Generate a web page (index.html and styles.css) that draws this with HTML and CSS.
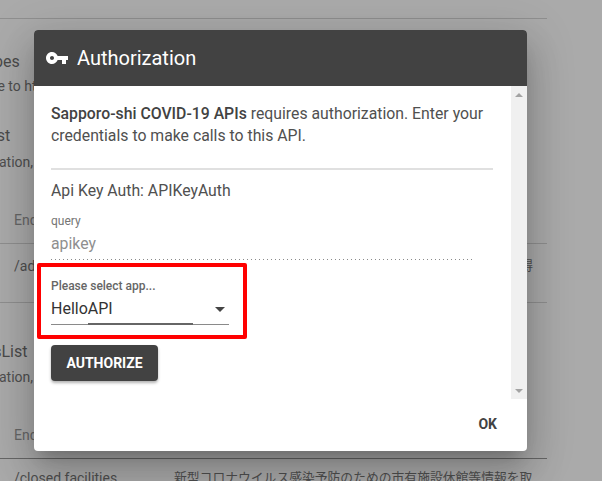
FILE: index.html
```html
<!DOCTYPE html>
<html lang="en">
<head>
<meta charset="utf-8">
<title>Authorization</title>
<link rel="stylesheet" href="styles.css">
</head>
<body>
<main class="page">
  <div class="rule rule-top"></div>
  <h2 class="bg-title bg-title-a">Scopes</h2>
  <p class="bg-text bg-text-a">Subscribe to https://example</p>
  <h2 class="bg-title bg-title-b">FacilitiesList</h2>
  <p class="bg-text bg-text-b">information,</p>
  <p class="bg-end bg-end-a">Endpoint</p>
  <div class="rule rule-a"></div>
  <div class="bg-row bg-row-a"><span>/admin</span><span class="bg-desc">新型コロナウイルス感染予防のための市有施設休館等情報を取得</span></div>
  <div class="rule rule-b"></div>
  <h2 class="bg-title bg-title-c">ClosedFacilitiesList</h2>
  <p class="bg-text bg-text-c">information,</p>
  <p class="bg-end bg-end-b">Endpoint</p>
  <div class="rule rule-c"></div>
  <div class="bg-row bg-row-b"><span class="bg-path">/closed facilities</span><span class="bg-desc-b">新型コロナウイルス感染予防のための市有施設休館等情報を取</span></div>
</main>

<section class="dialog">
  <header class="dialog-head">
    <svg class="key" viewBox="0 0 24 24" aria-hidden="true"><path d="M12.65 10C11.83 7.67 9.61 6 7 6c-3.31 0-6 2.69-6 6s2.69 6 6 6c2.61 0 4.83-1.67 5.65-4H17v4h4v-4h2v-4H12.65zM7 14c-1.1 0-2-.9-2-2s.9-2 2-2 2 .9 2 2-.9 2-2 2z"/></svg>
    <h1>Authorization</h1>
  </header>
  <div class="dialog-scroll">
    <div class="dialog-body">
      <p class="intro"><strong>Sapporo-shi COVID-19 APIs</strong> requires authorization. Enter your credentials to make calls to this API.</p>
      <hr class="divider">
      <p class="auth-name">Api Key Auth: APIKeyAuth</p>
      <div class="query">
        <label>query</label>
        <div class="query-value">apikey</div>
      </div>
      <div class="select-field">
        <label>Please select app...</label>
        <div class="select-value">
          <span>HelloAPI</span>
          <i class="caret"></i>
        </div>
        <i class="ripple"></i>
      </div>
      <button class="authorize">AUTHORIZE</button>
    </div>
    <div class="scrollbar"><i class="arrow-up"></i><i class="arrow-down"></i></div>
  </div>
  <footer class="dialog-foot"><button class="ok">OK</button></footer>
  <div class="highlight"></div>
</section>
</body>
</html>
```
FILE: styles.css
```css
* { box-sizing: border-box; }
html, body { margin: 0; height: 100%; }
body {
  width: 602px;
  height: 481px;
  overflow: hidden;
  position: relative;
  background: #aaaaaa;
  font-family: Roboto, "Noto Sans CJK JP", sans-serif;
  color: #444;
}
.page { width: 547px; height: 481px; overflow: hidden; }
.rule { height: 1px; background: #8f8f8f; width: 547px; }
.rule-top { margin-top: 18px; }
.bg-title { margin: 0; font-weight: 400; font-size: 16px; line-height: 20px; color: #4a4a4a; white-space: nowrap; }
.bg-text { margin: 0; font-size: 14px; line-height: 18px; color: #4f4f4f; white-space: nowrap; }
.bg-end { margin: 0 0 0 14px; font-size: 14px; line-height: 18px; color: #666; }
.bg-title-a { margin-top: 33px; margin-left: -33px; }
.bg-text-a { margin-top: 5px; margin-left: -57px; }
.bg-title-b { margin-top: 31px; margin-left: -79px; }
.bg-text-b { margin-top: 7px; margin-left: -42px; }
.bg-end-a { margin-top: 40px; }
.rule-a { margin-top: 14px; }
.bg-row { display: flex; align-items: center; font-size: 14px; line-height: 18px; color: #4f4f4f; white-space: nowrap; padding-left: 14px; }
.bg-row-a { margin-top: 13px; justify-content: space-between; }
.bg-desc { margin-right: 14px; font-size: 12.8px; }
.bg-desc-b { font-size: 12.8px; }
.rule-b { margin-top: 27px; }
.bg-title-c { margin-top: 39px; margin-left: -111px; }
.bg-text-c { margin-top: 6px; margin-left: -42px; }
.bg-end-b { margin-top: 40px; }
.rule-c { margin-top: 14px; background: #666; }
.bg-row-b { margin-top: 10px; }
.bg-path { width: 160px; flex: none; }

.dialog {
  position: absolute;
  left: 34px;
  top: 30px;
  width: 493px;
  height: 421px;
  background: #fff;
  border-radius: 4px;
  display: flex;
  flex-direction: column;
  box-shadow: 0 11px 15px -7px rgba(0,0,0,.2), 0 24px 38px 3px rgba(0,0,0,.14), 0 9px 46px 8px rgba(0,0,0,.12);
}
.dialog-head {
  height: 56px;
  flex: none;
  background: #424242;
  border-radius: 4px 4px 0 0;
  display: flex;
  align-items: center;
  gap: 8px;
  padding-left: 11px;
  color: #fff;
}
.key { width: 24px; height: 24px; fill: #fff; flex: none; }
.dialog-head h1 { margin: 0; font-size: 20px; font-weight: 400; line-height: 24px; }
.dialog-scroll { height: 313px; flex: none; display: flex; }
.dialog-body { flex: 1; padding: 17px 18px 0 17px; min-width: 0; }
.intro { margin: 0; font-size: 15.8px; line-height: 22px; color: #505050; }
.intro strong { font-weight: 500; color: #424242; }
.divider { border: 0; height: 2px; background: #e0e0e0; margin: 21px 0 0; }
.auth-name { margin: 11px 0 0; font-size: 15.8px; line-height: 20px; color: #505050; }
.query {
  margin-top: 13px;
  width: 424px;
  height: 46px;
  background: linear-gradient(90deg, #8a8a8a 1px, transparent 1px) left bottom / 4px 1px repeat-x;
}
.query label { display: block; font-size: 12px; line-height: 14px; color: #757575; }
.query-value { margin-top: 6px; font-size: 15.8px; line-height: 20px; color: #8f8f8f; }
.select-field { position: relative; margin-top: 19px; width: 178px; height: 46px; border-bottom: 1px solid #8a8a8a; }
.select-field label { display: block; font-size: 12px; line-height: 14px; color: #666; font-weight: 500; }
.select-value { display: flex; align-items: center; justify-content: space-between; margin-top: 6px; font-size: 16px; line-height: 20px; color: #333; padding-right: 4px; }
.caret { width: 0; height: 0; border-left: 5px solid transparent; border-right: 5px solid transparent; border-top: 5px solid #444; }
.ripple { position: absolute; left: 37px; width: 105px; bottom: -1px; height: 2px; background: #666; }
.authorize {
  display: block;
  margin-top: 20px;
  width: 107px;
  height: 36px;
  border: 0;
  border-radius: 4px;
  background: #424242;
  color: #fff;
  font: 700 14px/36px Roboto, sans-serif;
  padding: 0;
  box-shadow: 0 2px 3px rgba(0,0,0,.3);
}
.scrollbar { width: 16px; flex: none; background: #f0f0f0; display: flex; flex-direction: column; justify-content: space-between; align-items: center; padding: 7px 0 6px; }
.arrow-up { width: 0; height: 0; border-left: 4px solid transparent; border-right: 4px solid transparent; border-bottom: 4px solid #a3a3a3; }
.arrow-down { width: 0; height: 0; border-left: 4px solid transparent; border-right: 4px solid transparent; border-top: 4px solid #a3a3a3; }
.dialog-foot { flex: 1; display: flex; justify-content: flex-end; align-items: flex-start; padding: 16px 30px 0 0; }
.ok { border: 0; background: none; padding: 0; font: 700 14px/18px Roboto, sans-serif; color: #424242; }
.highlight {
  position: absolute;
  left: 3px;
  top: 233px;
  width: 210px;
  height: 76px;
  border: 4px solid #ff0000;
  border-radius: 2px;
}
```
